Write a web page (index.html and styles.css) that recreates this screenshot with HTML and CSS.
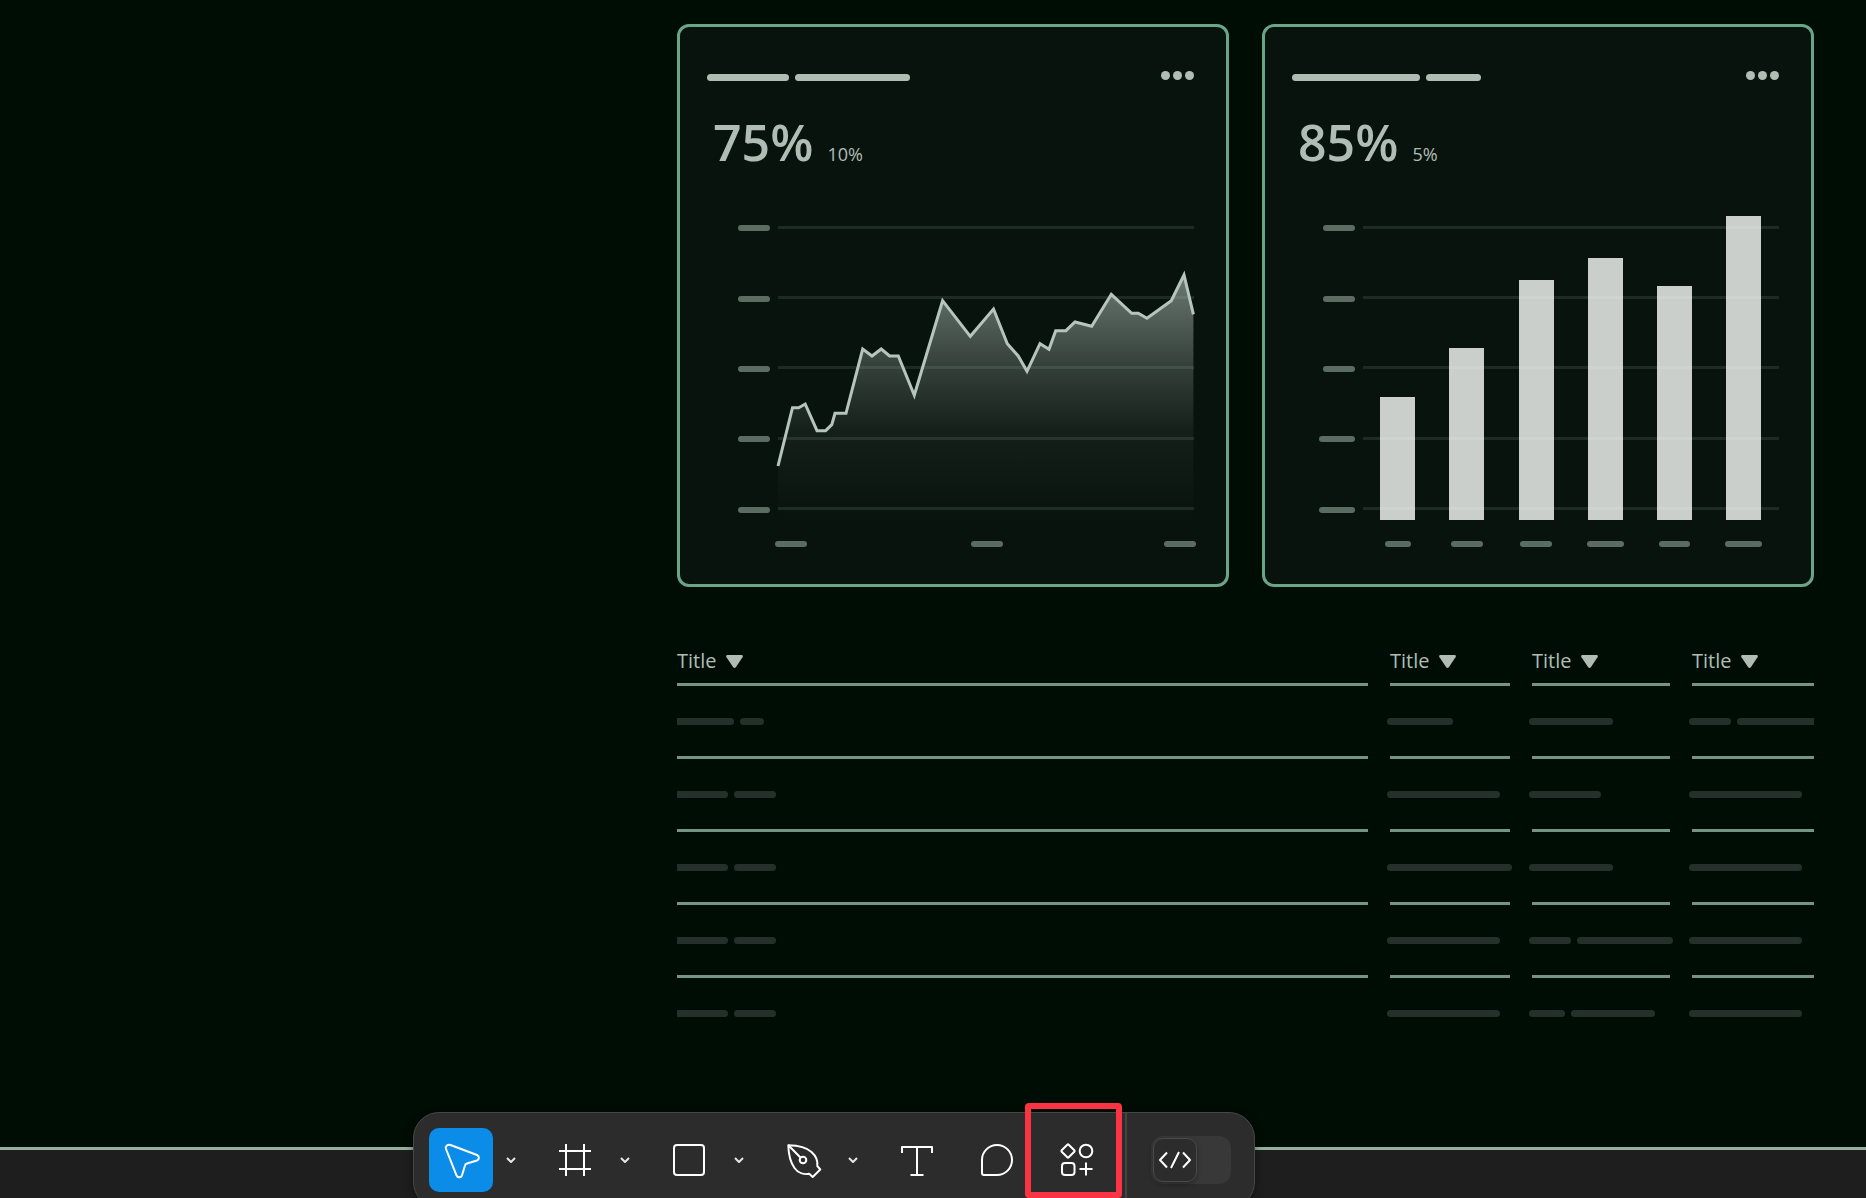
FILE: index.html
```html
<!DOCTYPE html>
<html lang="en">
<head>
<meta charset="utf-8">
<meta name="viewport" content="width=device-width, initial-scale=1">
<title>Dashboard wireframe</title>
<link rel="stylesheet" href="styles.css">
</head>
<body>
<main class="artboard">
  <section class="cards">
    <article class="card">
      <header class="card-head">
        <div class="bars"><span class="bar" style="width:82px"></span><span class="bar" style="width:115px"></span></div>
        <button class="more" type="button" aria-label="More options"><i></i><i></i><i></i></button>
      </header>
      <p class="figures"><strong class="figure">75%</strong><span class="delta">10%</span></p>
      <svg class="chart" viewBox="0 0 492 340" role="img" aria-label="Area chart">
        <defs>
          <linearGradient id="fade" x1="0" y1="64" x2="0" y2="306" gradientUnits="userSpaceOnUse">
            <stop offset="0" stop-color="#b4c3ba" stop-opacity=".58"/>
            <stop offset=".38" stop-color="#b4c3ba" stop-opacity=".25"/>
            <stop offset=".65" stop-color="#b4c3ba" stop-opacity=".07"/>
            <stop offset="1" stop-color="#b4c3ba" stop-opacity="0"/>
          </linearGradient>
        </defs>
        <g class="grid">
          <rect x="71" y="15" width="416" height="3"/><rect x="71" y="85" width="416" height="3"/><rect x="71" y="155" width="416" height="3"/><rect x="71" y="226" width="416" height="3"/><rect x="71" y="296" width="416" height="3"/>
        </g>
        <g class="tick">
          <rect x="31" y="14" width="32" height="6" rx="3"/><rect x="31" y="85" width="32" height="6" rx="3"/><rect x="31" y="155" width="32" height="6" rx="3"/><rect x="31" y="225" width="32" height="6" rx="3"/><rect x="31" y="296" width="32" height="6" rx="3"/>
          <rect x="68" y="330" width="32" height="6" rx="3"/><rect x="264" y="330" width="32" height="6" rx="3"/><rect x="457" y="330" width="32" height="6" rx="3"/>
        </g>
        <path fill="url(#fade)" d="M71 255 85.5 196.700H91.700L98.200 193 110 219.700H118.600L124.800 213.700 128 202.300H139L155.700 138 165 145 174.200 138 182.600 145H191.300L207.300 184.300 235.600 89.700 263.300 125.300 286.500 98 300.300 132.700 311.200 145 320 160.300 333 132.700 342 138.300 348.700 119.700H358.900L368 111 384.700 115.300 404.300 83.300 424.700 102.300H431.200L440 107.300 464.300 89.700 477 64 486.400 103.300V306H71Z"/>
        <path class="trend" d="M71 255 85.500 196.700H91.700L98.200 193 110 219.700H118.600L124.800 213.700 128 202.300H139L155.700 138 165 145 174.200 138 182.600 145H191.300L207.300 184.300 235.600 89.700 263.300 125.300 286.500 98 300.300 132.700 311.200 145 320 160.300 333 132.700 342 138.300 348.700 119.700H358.900L368 111 384.700 115.300 404.300 83.300 424.700 102.300H431.200L440 107.300 464.300 89.700 477 64 486.400 103.300"/>
      </svg>
    </article>
    <article class="card">
      <header class="card-head">
        <div class="bars"><span class="bar" style="width:128px"></span><span class="bar" style="width:55px"></span></div>
        <button class="more" type="button" aria-label="More options"><i></i><i></i><i></i></button>
      </header>
      <p class="figures"><strong class="figure">85%</strong><span class="delta">5%</span></p>
      <svg class="chart" viewBox="0 0 492 340" role="img" aria-label="Bar chart">
        <g class="grid">
          <rect x="71" y="15" width="416" height="3"/><rect x="71" y="85" width="416" height="3"/><rect x="71" y="155" width="416" height="3"/><rect x="71" y="226" width="416" height="3"/><rect x="71" y="296" width="416" height="3"/>
        </g>
        <g class="tick">
          <rect x="31" y="14" width="32" height="6" rx="3"/><rect x="31" y="85" width="32" height="6" rx="3"/><rect x="31" y="155" width="32" height="6" rx="3"/><rect x="27" y="225" width="36" height="6" rx="3"/><rect x="27" y="296" width="36" height="6" rx="3"/>
          <rect x="93" y="330" width="26" height="6" rx="3"/><rect x="159" y="330" width="32" height="6" rx="3"/><rect x="228" y="330" width="32" height="6" rx="3"/><rect x="295" y="330" width="37" height="6" rx="3"/><rect x="367" y="330" width="31" height="6" rx="3"/><rect x="433" y="330" width="37" height="6" rx="3"/>
        </g>
        <g class="column">
          <rect x="88" y="186" width="35" height="123"/><rect x="157" y="137" width="35" height="172"/><rect x="227" y="69" width="35" height="240"/><rect x="296" y="47" width="35" height="262"/><rect x="365" y="75" width="35" height="234"/><rect x="434" y="5" width="35" height="304"/>
        </g>
      </svg>
    </article>
  </section>

  <div class="table-wrap">
  <table class="table">
    <colgroup><col><col class="col-b"><col class="col-c"><col class="col-d"></colgroup>
    <thead>
      <tr>
        <th scope="col"><button class="sort" type="button">Title<svg width="17" height="13" viewBox="0 0 17 13" aria-hidden="true"><path d="M1.500 0H15.500Q17.600 .3 16.500 2.200L10 12Q8.500 14 7 12L.5 2.200Q-.6 .3 1.500 0Z"/></svg></button></th>
        <th scope="col"><button class="sort" type="button">Title<svg width="17" height="13" viewBox="0 0 17 13" aria-hidden="true"><path d="M1.500 0H15.500Q17.600 .3 16.500 2.200L10 12Q8.500 14 7 12L.5 2.200Q-.6 .3 1.500 0Z"/></svg></button></th>
        <th scope="col"><button class="sort" type="button">Title<svg width="17" height="13" viewBox="0 0 17 13" aria-hidden="true"><path d="M1.500 0H15.500Q17.600 .3 16.500 2.200L10 12Q8.500 14 7 12L.5 2.200Q-.6 .3 1.500 0Z"/></svg></button></th>
        <th scope="col"><button class="sort" type="button">Title<svg width="17" height="13" viewBox="0 0 17 13" aria-hidden="true"><path d="M1.500 0H15.500Q17.600 .3 16.500 2.200L10 12Q8.500 14 7 12L.5 2.200Q-.6 .3 1.500 0Z"/></svg></button></th>
      </tr>
    </thead>
    <tbody>
      <tr>
        <td><div class="bars"><span class="bar" style="width:60px"></span><span class="bar" style="width:24px"></span></div></td>
        <td><div class="bars"><span class="bar" style="width:66px"></span></div></td>
        <td><div class="bars"><span class="bar" style="width:84px"></span></div></td>
        <td><div class="bars"><span class="bar" style="width:42px"></span><span class="bar" style="width:96px"></span></div></td>
      </tr>
      <tr>
        <td><div class="bars"><span class="bar" style="width:54px"></span><span class="bar" style="width:42px"></span></div></td>
        <td><div class="bars"><span class="bar" style="width:113px"></span></div></td>
        <td><div class="bars"><span class="bar" style="width:72px"></span></div></td>
        <td><div class="bars"><span class="bar" style="width:113px"></span></div></td>
      </tr>
      <tr>
        <td><div class="bars"><span class="bar" style="width:54px"></span><span class="bar" style="width:42px"></span></div></td>
        <td><div class="bars"><span class="bar" style="width:125px"></span></div></td>
        <td><div class="bars"><span class="bar" style="width:84px"></span></div></td>
        <td><div class="bars"><span class="bar" style="width:113px"></span></div></td>
      </tr>
      <tr>
        <td><div class="bars"><span class="bar" style="width:54px"></span><span class="bar" style="width:42px"></span></div></td>
        <td><div class="bars"><span class="bar" style="width:113px"></span></div></td>
        <td><div class="bars"><span class="bar" style="width:42px"></span><span class="bar" style="width:96px"></span></div></td>
        <td><div class="bars"><span class="bar" style="width:113px"></span></div></td>
      </tr>
      <tr>
        <td><div class="bars"><span class="bar" style="width:54px"></span><span class="bar" style="width:42px"></span></div></td>
        <td><div class="bars"><span class="bar" style="width:113px"></span></div></td>
        <td><div class="bars"><span class="bar" style="width:36px"></span><span class="bar" style="width:84px"></span></div></td>
        <td><div class="bars"><span class="bar" style="width:113px"></span></div></td>
      </tr>
    </tbody>
  </table>
  </div>
</main>

<nav class="toolbar" aria-label="Tools">
  <div class="group">
    <button class="tool active" type="button" aria-label="Move"><svg class="icon" viewBox="-24 -24 48 48"><path d="M-10.500 -15 16 -5C18.500 -4 18.500 -.5 16 .5L6 3.500Q4.300 4 4 5.500L1 15.300C0 18-3.500 18-4.500 15.300L-15 -11C-16 -13.800-13 -16-10.500 -15Z"/></svg></button>
    <button class="caret" type="button" aria-label="Move options"><svg width="14" height="8" viewBox="-7 -4 14 8"><path d="M-4 -2 0 2 4 -2"/></svg></button>
  </div>
  <div class="group">
    <button class="tool" type="button" aria-label="Frame"><svg class="icon" viewBox="-24 -24 48 48"><path d="M-9 -16V16M9 -16V16M-16 -9H16M-16 9H16"/></svg></button>
    <button class="caret" type="button" aria-label="Frame options"><svg width="14" height="8" viewBox="-7 -4 14 8"><path d="M-4 -2 0 2 4 -2"/></svg></button>
  </div>
  <div class="group">
    <button class="tool" type="button" aria-label="Rectangle"><svg class="icon" viewBox="-24 -24 48 48"><rect x="-15" y="-15" width="30" height="30" rx="3"/></svg></button>
    <button class="caret" type="button" aria-label="Shape options"><svg width="14" height="8" viewBox="-7 -4 14 8"><path d="M-4 -2 0 2 4 -2"/></svg></button>
  </div>
  <div class="group">
    <button class="tool" type="button" aria-label="Pen"><svg class="icon" viewBox="-24 -24 48 48"><path d="M-14.700 -14.700C-7 -14.500 3 -13 8.500 -8C13.500 -3.500 15 1 14.300 6L17.300 9.500 9.700 17 6.200 13.800C1 14.800-5 13-8.500 8C-12.500 2.500-14.500 -7-14.700 -14.700L-2.300 -2.300"/><circle r="3.300"/></svg></button>
    <button class="caret" type="button" aria-label="Pen options"><svg width="14" height="8" viewBox="-7 -4 14 8"><path d="M-4 -2 0 2 4 -2"/></svg></button>
  </div>
  <div class="singles">
    <button class="tool" type="button" aria-label="Text"><svg class="icon" viewBox="-24 -24 48 48"><path d="M-15 -7V-13H15V-7M0 -13V15M-6.500 15H6.500"/></svg></button>
    <button class="tool" type="button" aria-label="Comment"><svg class="icon" viewBox="-24 -24 48 48"><path d="M0 -15A15 15 0 0 1 0 15H-13Q-15 15-15 13V0A15 15 0 0 1 0 -15Z"/></svg></button>
    <button class="tool" type="button" aria-label="Actions"><svg class="icon" viewBox="-24 -24 48 48"><path d="M-9.700 -15.300Q-9 -16-8.300 -15.300L-2.700 -9.700Q-2 -9-2.700 -8.300L-8.300 -2.700Q-9 -2-9.700 -2.700L-15.300 -8.300Q-16 -9-15.300 -9.700Z"/><circle cx="9" cy="-9" r="6.300"/><rect x="-15" y="3" width="12.500" height="12" rx="3"/><path d="M9 2.500V15.500M2.500 9H15.500"/></svg></button>
  </div>
  <button class="switch" type="button" role="switch" aria-checked="false" aria-label="Dev Mode"><span class="knob"><svg width="42" height="42" viewBox="-21 -21 42 42"><path d="M-8 -7.500-15 0-8 7.500M8 -7.500 15 0 8 7.500M4 -8-4 8"/></svg></span></button>
</nav>
<div class="highlight"></div>
</body>
</html>
```

FILE: styles.css
```css
* {
  box-sizing: border-box;
}

body {
  margin: 0;
  min-height: 100vh;
  overflow: hidden;
  background: #1e1e1e;
  color: #b0bdb5;
  font: 20px/28px "Open Sans", "Noto Sans", sans-serif;
}

button {
  padding: 0;
  border: 0;
  background: none;
  color: inherit;
  font: inherit;
}

svg {
  display: block;
}

.artboard {
  padding: 24px 52px 99px 677px;
  border-bottom: 3px solid #94b09f;
  background: #000d04;
}

.cards {
  display: grid;
  grid-template-columns: 1fr 1fr;
  gap: 33px;
}

.card {
  padding: 44px 27px 33px;
  border: 3px solid #6ba588;
  border-radius: 12px;
  background: #09130e;
}

.card-head {
  display: flex;
  align-items: flex-end;
  justify-content: space-between;
  height: 10px;
}

.bars {
  display: flex;
  gap: 6px;
}

.bar {
  flex: none;
  height: 7px;
  border-radius: 4px;
  background: #b0bdb5;
}

.more {
  display: flex;
  align-self: flex-start;
  gap: 3px;
  padding-right: 5px;
}

.more i {
  width: 9px;
  height: 9px;
  border-radius: 50%;
  background: #b0bdb5;
}

.figures {
  display: flex;
  align-items: baseline;
  gap: 14px;
  margin: 31px 0 39px;
  padding-left: 6px;
}

.figure {
  font-size: 50px;
  line-height: 60px;
  font-weight: 600;
}

.delta {
  font-size: 18px;
}

.chart {
  width: 100%;
}

.grid {
  fill: #1e2a24;
}

.tick {
  fill: #5b6d63;
}

.column {
  fill: rgba(252, 255, 253, 0.8);
}

.trend {
  fill: none;
  stroke: #b6c5bc;
  stroke-width: 3;
}

.table-wrap {
  margin: 60px -22px 0;
}

.table {
  width: 100%;
  border-spacing: 22px 0;
  table-layout: fixed;
}

.col-b {
  width: 120px;
}

.col-c {
  width: 138px;
}

.col-d {
  width: 122px;
}

.table th {
  padding: 0 0 8px;
  border-bottom: 3px solid #749484;
  font-weight: 400;
  text-align: left;
}

.sort {
  display: flex;
  align-items: center;
  gap: 10px;
}

.sort svg {
  fill: #b0bdb5;
}

.table td {
  padding: 32px 0 31px;
  border-bottom: 3px solid #749484;
}

.table tr:last-child td {
  border-bottom: 0;
}

.table td .bars {
  margin: 0 -4px 0 -3px;
}

.table td .bar {
  background: #25302a;
}

.table td:first-child .bars {
  overflow: hidden;
  margin: 0;
}

.table td:first-child .bar:first-child {
  margin-left: -3px;
}

.table td:last-child .bars {
  overflow: hidden;
  margin-right: 0;
}

.toolbar {
  position: fixed;
  bottom: -10px;
  left: 413px;
  display: flex;
  align-items: center;
  gap: 14px;
  height: 96px;
  padding: 0 0 0 15px;
  border: 1px solid #474747;
  border-radius: 26px;
  background: #2c2c2c;
  box-shadow: 0 3px 8px rgba(0, 0, 0, 0.4);
}

.group {
  display: flex;
}

.tool {
  display: grid;
  place-items: center;
  width: 64px;
  height: 64px;
  border-radius: 10px;
}

.tool.active {
  background: #0c8ce9;
}

.caret {
  display: grid;
  place-items: center;
  width: 36px;
  height: 64px;
}

.toolbar svg {
  fill: none;
  stroke: #fff;
  stroke-width: 2;
  stroke-linejoin: round;
}

.caret svg {
  stroke: #e6e6e6;
}

.icon {
  width: 48px;
  height: 48px;
}

.singles {
  display: flex;
  align-items: center;
  gap: 16px;
  height: 94px;
  padding-right: 16px;
  border-right: 2px solid #444;
}

.switch {
  width: 80px;
  height: 48px;
  margin: 0 23px 0 10px;
  padding: 2px;
  border-radius: 12px;
  background: #383838;
}

.knob {
  display: grid;
  place-items: center;
  width: 44px;
  height: 44px;
  border: 1px solid #4a4a4a;
  border-radius: 10px;
  background: #2c2c2c;
  box-shadow: 0 2px 5px rgba(0, 0, 0, 0.3);
}

.highlight {
  position: fixed;
  bottom: 0;
  left: 1025px;
  width: 97px;
  height: 95px;
  border: 6px solid #fa3442;
  border-radius: 4px;
  pointer-events: none;
}
```
